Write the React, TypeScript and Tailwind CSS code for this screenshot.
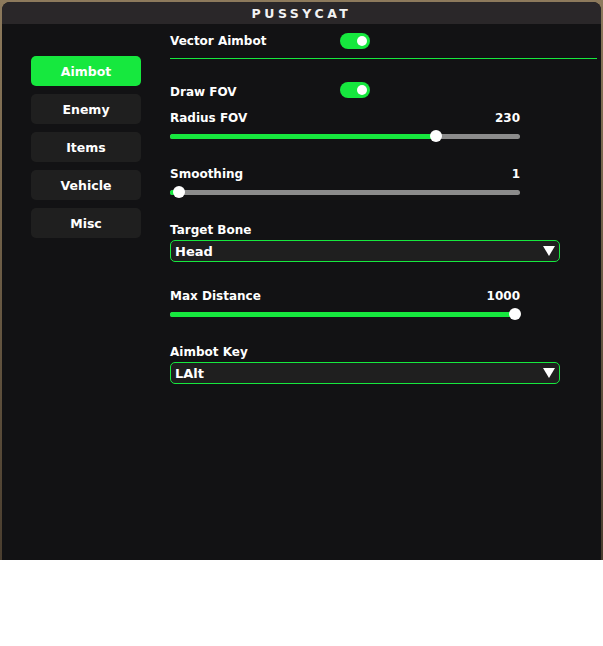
import { useState } from "react";

const font = { fontFamily: '"DejaVu Sans", Verdana, sans-serif' };

const tabs = ["Aimbot", "Enemy", "Items", "Vehicle", "Misc"];

function Toggle({ on }: { on: boolean }) {
  return (
    <div
      className={`relative w-[30px] h-[16px] rounded-full ${on ? "bg-[#16e83e]" : "bg-[#3a3a3a]"}`}
    >
      <div
        className={`absolute top-[3px] w-[10px] h-[10px] rounded-full bg-white ${on ? "left-[17px]" : "left-[3px]"}`}
      />
    </div>
  );
}

function Slider({
  label,
  value,
  knob,
  className,
}: {
  label: string;
  value: string;
  knob: number;
  className: string;
}) {
  return (
    <>
      <div className={`${className} w-[350px] h-[16px] pt-[2px] flex items-center justify-between`}>
        <span>{label}</span>
        <span>{value}</span>
      </div>
      <div className="mt-[5px] w-[350px] h-[12px] relative flex items-center">
        <div className="w-full h-[5px] rounded-full bg-[#8c8c8c]" />
        <div
          className="absolute left-0 h-[5px] rounded-l-full bg-[#16e83e]"
          style={{ width: knob }}
        />
        <div
          className="absolute top-0 w-[12px] h-[12px] rounded-full bg-white"
          style={{ left: knob - 6 }}
        />
      </div>
    </>
  );
}

function Select({ label, value }: { label: string; value: string }) {
  return (
    <>
      <div className="mt-[23px] h-[16px] pt-[2px] flex items-center">{label}</div>
      <div className="mt-[3px] w-[390px] h-[22px] rounded-[5px] border border-[#16e83e] bg-[#1f1f1f] flex items-center justify-between pl-[4px] pr-[4px]">
        <span className="text-[13px] pt-[1px]">{value}</span>
        <svg width="12" height="10" viewBox="0 0 12 10">
          <path d="M0 0 H12 L6 10 Z" fill="#ffffff" />
        </svg>
      </div>
    </>
  );
}

export default function App() {
  const [active, setActive] = useState("Aimbot");

  return (
    <div className="w-[603px] h-[646px] bg-white" style={font}>
      <div className="h-[560px] pt-[2px] pl-[2px] pr-[2px] bg-gradient-to-b from-[#8d7a5c] to-[#4a3e2f]">
        <div className="h-full flex flex-col rounded-t-[8px] overflow-hidden bg-[#121214] text-white font-bold text-[12px]">
          <div className="h-[22px] shrink-0 pt-[2px] bg-[#2a2729] flex items-center justify-center text-[12.5px] tracking-[3.5px] text-[#f2f2f2]">
            PUSSYCAT
          </div>

          <div className="flex flex-1">
            {/* tabs */}
            <div className="w-[168px] shrink-0 pl-[29px] pt-[32px] flex flex-col gap-[8px]">
              {tabs.map((t) => (
                <button
                  key={t}
                  onClick={() => setActive(t)}
                  className={`w-[110px] h-[30px] pt-[3px] rounded-[5px] text-[12.5px] font-bold ${
                    active === t ? "bg-[#16e83e]" : "bg-[#1f1f1f]"
                  }`}
                >
                  {t}
                </button>
              ))}
            </div>

            {/* settings */}
            <div className="flex-1 flex flex-col pr-[4px]">
              <div className="mt-[8px] h-[16px] flex items-center pt-[2px]">
                <span className="w-[170px]">Vector Aimbot</span>
                <Toggle on />
              </div>
              <div className="mt-[10px] h-px bg-[#16e83e]" />

              <div className="mt-[23px] h-[16px] flex items-center">
                <span className="w-[170px] pt-[3px]">Draw FOV</span>
                <Toggle on />
              </div>

              <Slider className="mt-[11px]" label="Radius FOV" value="230" knob={266} />
              <Slider className="mt-[23px]" label="Smoothing" value="1" knob={9} />

              <Select label="Target Bone" value="Head" />

              <Slider className="mt-[25px]" label="Max Distance" value="1000" knob={345} />

              <Select label="Aimbot Key" value="LAlt" />
            </div>
          </div>
        </div>
      </div>
    </div>
  );
}
